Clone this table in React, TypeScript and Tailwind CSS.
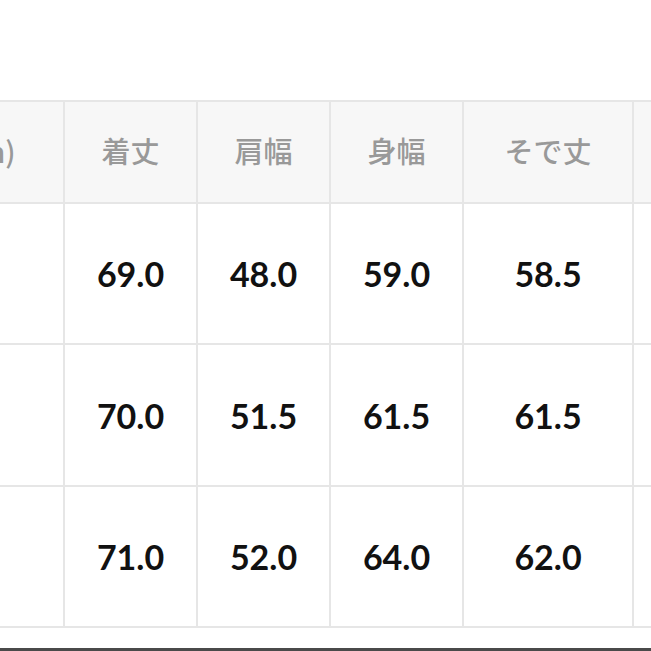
const headers = ["サイズ(cm)", "着丈", "肩幅", "身幅", "そで丈", "裾幅"];

const rows = [
  ["S", "69.0", "48.0", "59.0", "58.5", "52.0"],
  ["M", "70.0", "51.5", "61.5", "61.5", "55.0"],
  ["L", "71.0", "52.0", "64.0", "62.0", "58.0"],
];

export default function App() {
  return (
    <div className="flex h-[651px] w-[651px] flex-col overflow-hidden bg-white">
      <div className="pt-[100px]">
        <div className="ml-[-183px] grid w-max grid-cols-[244px_131px_131px_131px_168px_200px] grid-rows-[100px_139px_140px_139px] gap-[2px] bg-[#e6e6e6] p-[2px]">
          {headers.map((h) => (
            <div
              key={h}
              className="flex items-center justify-center bg-[#f7f7f7] pb-[2px] text-[29px] font-medium text-[#999] [font-family:'Noto_Sans_CJK_JP',sans-serif]"
            >
              {h}
            </div>
          ))}
          {rows.map((r) =>
            r.map((v, i) => (
              <div
                key={r[0] + i}
                className="flex items-center justify-center bg-white text-[34px] font-bold text-[#111] [font-family:Lato,sans-serif]"
              >
                {v}
              </div>
            ))
          )}
        </div>
      </div>
      <div className="flex-1" />
      <div className="h-[3px] bg-[#4a4a4a]" />
    </div>
  );
}
